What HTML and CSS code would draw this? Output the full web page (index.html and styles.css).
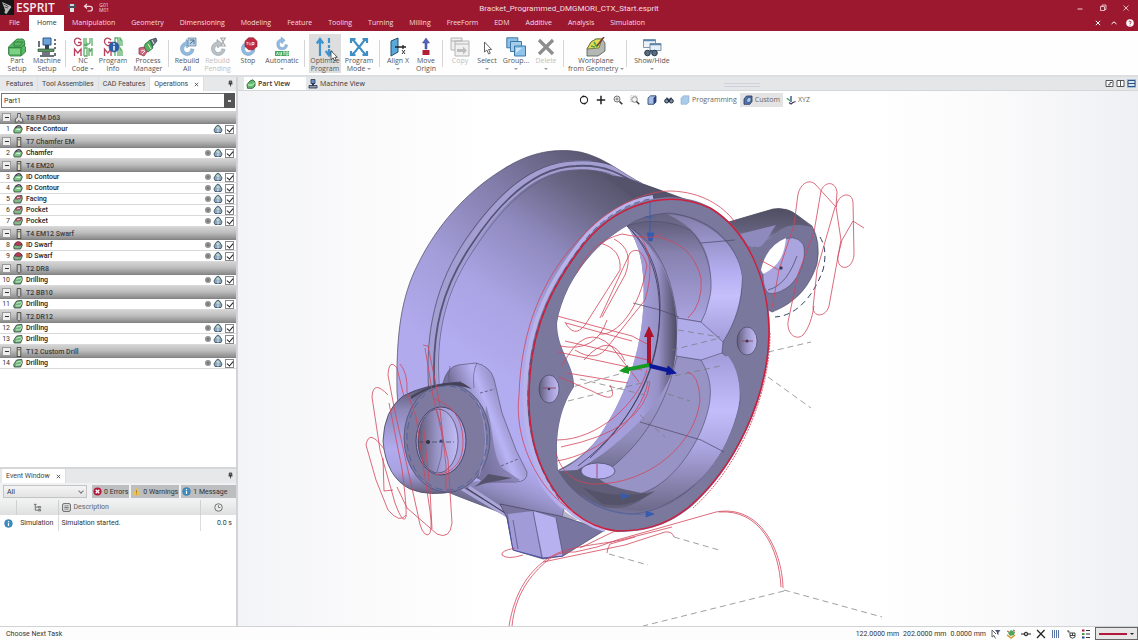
FILE: index.html
```html
<!DOCTYPE html>
<html lang="en">
<head>
<meta charset="utf-8">
<title>ESPRIT</title>
<link rel="stylesheet" href="styles.css">
</head>
<body>
<svg class="defs" aria-hidden="true">
  <symbol id="op-green" viewBox="0 0 10 10"><path d="M.7 6.5 3.6 2l5.2-.6.5 3.4L7.6 9H1.2z" fill="#6fb57b" stroke="#263e2e" stroke-width=".8"/><path d="M3.3 4.2 8.6 3M3 7l4.3-.3L9 4" fill="none" stroke="#dff5df" stroke-width=".8"/></symbol>
  <symbol id="op-ridge" viewBox="0 0 10 10"><path d="M.7 6.5 2.5 3h5.8l1 2L7.6 9H1.2z" fill="#80c48a" stroke="#263e2e" stroke-width=".8"/><path d="M2.5 4.2C3.5 1 7 .8 8.3 3.4" fill="none" stroke="#4a3d55" stroke-width="1.2"/><path d="M3.4 5.3h3.8" stroke="#e6ffe6"/></symbol>
  <symbol id="op-pocket" viewBox="0 0 10 10"><path d="M.7 6.5 3.6 2l5.2-.6.5 3.4L7.6 9H1.2z" fill="#86b98b" stroke="#2c3a33" stroke-width=".8"/><path d="M2.6 5 4 2.3l4.4-.2L7 4.8z" fill="#dfb7bd" stroke="#8f2d45" stroke-width=".9"/></symbol>
  <symbol id="op-swarf" viewBox="0 0 10 10"><path d="M.7 6.5 2.5 3h5.8l1 2L7.6 9H1.2z" fill="#80b58a" stroke="#2c3a33" stroke-width=".8"/><path d="M1.8 5C2 1 7.6.2 9 4.4L6.5 5.8z" fill="#b23b55" stroke="#4f2733" stroke-width=".6"/></symbol>
  <symbol id="mill" viewBox="0 0 6 11"><rect x="1" y=".6" width="4" height="9.8" fill="#d9d6c2" stroke="#444"/><path d="M1.5 3h3" stroke="#444" stroke-width=".8"/></symbol>
  <symbol id="drill" viewBox="0 0 6 11"><path d="M1 .6h4v7.6L3 10.4 1 8.200z" fill="#c4c4c4" stroke="#444"/></symbol>
  <symbol id="face" viewBox="0 0 10 11"><path d="M3.500.5h3v4.300l2 1.200L9.400 10H6.800L5 8.200 3.200 10H.6l.9-4 2-1.200z" fill="#ddd" stroke="#444" stroke-width=".9"/></symbol>
  <symbol id="dot" viewBox="0 0 8 8"><circle cx="4" cy="4" r="3" fill="#929292"/><circle cx="4" cy="4" r="1.200" fill="#777"/></symbol>
  <symbol id="sim" viewBox="0 0 10 10"><path d="M1 6 3 2.500l2-1.500 2 1.500L9 6 8 8.500H2z" fill="#8ea7bd" stroke="#3c5269" stroke-width=".9"/><path d="M3 3.500 5 2.500 7 4 5 6z" fill="#bfd8c4"/><path d="M5 6v2.500" stroke="#dce8f4"/></symbol>
  <symbol id="gearball" viewBox="0 0 20 20"><path d="M9 5a6.800 6.800 0 1 0 8 7.500l-3.200-.7A3.600 3.600 0 1 1 9.500 8.500l.3 2.500L14 6.500 9 2.500z" fill="currentColor" stroke="#6d8eac" stroke-width=".5"/></symbol>
  <symbol id="info" viewBox="0 0 10 10"><circle cx="5" cy="5" r="4.400" fill="#3b8fc4" stroke="#26698f" stroke-width=".4"/><path d="M5 4.300v3.500M5 2.200v1.200" stroke="#fff" stroke-width="1.300"/></symbol>
  <symbol id="pin" viewBox="0 0 6 8"><path d="M1.500 1h3v3.200h-3zM.5 4.500h5M3 4.500V7.500" fill="#777" stroke="#333" stroke-width="1"/></symbol>
  <symbol id="cross" viewBox="0 0 6 6"><path d="M1 1l4 4M5 1 1 5" stroke="currentColor" stroke-width="1" fill="none"/></symbol>
</svg>

<div class="app">
<header class="top">
  <div class="titlebar">
    <div class="brand">
      <svg class="logo" viewBox="0 0 14 15"><rect width="14" height="15" fill="#151515"/><path d="M2 2l8 3.500 1.500 1.500-2 2.500-3 4.500-2-1 .5-3z" fill="#b9b9b9"/><path d="M3.500 4l5 2.500M4.500 7l3.500 1" stroke="#333" stroke-width=".8"/></svg>
      <span>ESPRIT</span>
    </div>
    <button class="quick" aria-label="Save"><svg viewBox="0 0 10 10"><path d="M1.500 1h7v4h-7z" fill="#46505d"/><path d="M3 1h4v2H3z" fill="#cdd6df"/><path d="M3 5h4v4H3z" fill="#dce3ea"/></svg></button>
    <button class="quick" aria-label="Undo"><svg viewBox="0 0 10 10"><path d="M4 1 1.500 3.300 4 5.500M1.800 3.300h5.200a2.300 2.300 0 0 1 0 4.700H4.500" fill="none" stroke="#f3d9de" stroke-width="1.200"/></svg></button>
    <button class="gcode">G01<br>M01</button>
    <h1>Bracket_Programmed_DMGMORI_CTX_Start.esprit</h1>
    <div class="win">
      <button aria-label="Minimize"><svg viewBox="0 0 8 8"><path d="M1.500 5h5" stroke="#f0ccd3"/></svg></button>
      <button aria-label="Restore"><svg viewBox="0 0 8 8"><path d="M1.500 2.500h4v4h-4zM3 2.500V1h4v4.500H5.500" stroke="#f0ccd3" fill="none" stroke-width=".9"/></svg></button>
      <button aria-label="Close"><svg viewBox="0 0 8 8"><path d="M1.500 1.500l5 5M6.500 1.500l-5 5" stroke="#f0ccd3" stroke-width=".9"/></svg></button>
    </div>
  </div>
  <nav class="menu">
    <button class="file">File</button><button class="on">Home</button><button>Manipulation</button><button>Geometry</button><button>Dimensioning</button><button>Modeling</button><button>Feature</button><button>Tooling</button><button>Turning</button><button>Milling</button><button>FreeForm</button><button>EDM</button><button>Additive</button><button>Analysis</button><button>Simulation</button>
    <div class="win small">
      <button aria-label="Close document"><svg viewBox="0 0 8 8"><path d="M1.800 1.800l4.400 4.400M6.200 1.800 1.800 6.200" stroke="#fff"/></svg></button>
      <button aria-label="Collapse ribbon"><svg viewBox="0 0 8 8"><path d="M1.500 5 4 2.800 6.500 5" stroke="#fff" fill="none"/></svg></button>
      <button aria-label="Help"><svg viewBox="0 0 8 8"><circle cx="4" cy="4" r="3.800" fill="#fff"/><path d="M2.900 3.200c0-1.600 2.300-1.400 2.200 0C5 4 4 4 4 5M4 5.700v.8" stroke="#9b182f" fill="none" stroke-width=".9"/></svg></button>
    </div>
  </nav>
</header>

<div class="ribbon">
  <div class="set">
    <button class="w28"><svg viewBox="0 0 20 20"><path d="M1.500 10 7 4.500l3-2.500h6l1.500 2v5l1 1v5L14 19H3l-1.500-2z" fill="#58b763" stroke="#28763a" stroke-width=".8"/><path d="M2 10.500h12l4.500-3.500M14 10.500V19M7 5h9M7 5v4h6l3-4" fill="none" stroke="#2a7a3b" stroke-width=".8"/><path d="M3 12h10v5H3z" fill="#7dd184"/></svg>Part<br>Setup</button>
    <button class="w32"><svg viewBox="0 0 20 20"><path d="M6 1h8v7H6z" fill="#6fa2d6" stroke="#2b5b8e"/><path d="M8 8h4v4H8z" fill="#345"/><path d="M1 12h16v2.500H1z" fill="#5d9a62" stroke="#2d4f37" stroke-width=".7"/><path d="M5 15h8v3H5z" fill="#6e7780"/><path d="M3 19h14M2 4v6M18 2v2M18 6v2M18 10v2M18 16v3" stroke="#3b444d" stroke-width="1.500"/></svg>Machine<br>Setup</button>
  </div>
  <div class="set">
    <button class="w26"><svg viewBox="0 0 20 20" fill="none" stroke-width="1.300"><path d="M8 3C5-.5 1 1.500 1.500 5S6 9.500 8 7.500V5.500H5M1.500 19v-7l3.300 4 3.200-4v7" stroke="#b8405c"/><path d="M11 1v8l3.500-3M13 1v8l4-3V1M19 1v8M11 19v-8h3v8h-3M16 19v-8l1.500 3 1.500-3v8" stroke="#5cae69"/></svg>NC<br>Code <i></i></button>
    <button class="w34"><svg viewBox="0 0 20 20" fill="none" stroke-width="1.300"><path d="M8 3C5-.5 1 1.500 1.500 5S6 9.500 8 7.500V5.500H5M1.500 19v-7l3.300 4 3.200-4v7" stroke="#b8405c"/><path d="M12 1h3v8h-3zM17 9V1l2 3v5M12 19v-8h3v8M17 19v-8l2 3v5" stroke="#5cae69"/><circle cx="11" cy="10" r="5" fill="#2d5eaa" stroke="#234c86" stroke-width=".6"/><path d="M11 9v4.500M11 6.200v1.500" stroke="#fff" stroke-width="1.500"/></svg>Program<br>Info</button>
    <button class="w36"><svg viewBox="0 0 20 20"><path d="M12 3l6-2 1 3-5 6-4-2z" fill="#5d6e7e" stroke="#27313b" stroke-width=".6"/><path d="M7 7 12 3l3 8-5 4-4-3z" fill="#4fb05d" stroke="#205d2c" stroke-width=".7"/><path d="M1 11l5-1 3 5-3 4-5-2z" fill="#cc6b7f" stroke="#8d2942" stroke-width=".7"/><path d="M3 14l4-1M10 7l3 5M4 17l3-3M14 3l2 4" stroke="#f2e7ea"/></svg>Process<br>Manager</button>
  </div>
  <div class="set">
    <button class="w28 blue"><svg viewBox="0 0 20 20"><use href="#gearball"/><path d="M11 1h8v8h-8z" fill="#b9d0e4" stroke="#64809c" stroke-width=".7"/><path d="M13 3h4v4M13 7l4-4" stroke="#4c7298" fill="none"/></svg>Rebuild<br>All</button>
    <button class="w33 off"><svg viewBox="0 0 20 20"><use href="#gearball"/><path d="M12 1h6M12 9h6M13 1l4 8M17 1l-4 8" stroke="#aaa" stroke-width="1.200"/></svg>Rebuild<br>Pending</button>
    <button class="w28 blue"><svg viewBox="0 0 20 20"><use href="#gearball"/><path d="M10.500.8h5l3.500 3.500v5l-3.500 3.500h-5L7 9.300v-5z" fill="#c02b42" stroke="#81192b" stroke-width=".6"/><path d="M8.500 5.500h2M8.500 7h2M12 5.500v3M14 8.500v-3h2v2h-2" stroke="#fff" stroke-width=".8" fill="none"/></svg>Stop<br>&nbsp;</button>
    <button class="w40 blue"><svg viewBox="0 0 20 20"><g transform="translate(2 -2) scale(.8)"><use href="#gearball" width="20" height="20"/></g><rect x="3" y="14" width="14" height="5" fill="#45a75c"/><path d="M4.500 18l1-3 1 3M8 15v3h1.500v-3M11 15h2M12 15v3M14 15h2v3h-2z" stroke="#fff" stroke-width=".7" fill="none"/></svg>Automatic<br><i></i></button>
  </div>
  <div class="set">
    <button class="w32 hot"><svg viewBox="0 0 20 20"><path d="M5 19V3M1.800 6.500 5 2l3.200 4.500M14 1v5M14 8v3M14 12v6M10.800 14l3.200 4.500 3.200-4.500" stroke="#3f93cf" stroke-width="2.200" fill="none"/></svg>Optimize<br>Program<svg class="pointer" viewBox="0 0 8 12"><path d="M1 .8v9l2.200-2L4.600 11l1.600-.7-1.400-3h2.600z" fill="#fff" stroke="#333" stroke-width=".8"/></svg></button>
    <button class="w36"><svg viewBox="0 0 20 20"><path d="M3 2.500c3 1 3.500 4 7 7.500s4 6 7 7.500M17 2.500c-3 1-3.500 4-7 7.500s-4 6-7 7.500M2 6V2h4.500M18 6V2h-4.500M2 14v4h4.500M18 14v4h-4.500" stroke="#3f8ec4" stroke-width="2.200" fill="none"/></svg>Program<br>Mode <i></i></button>
  </div>
  <div class="set">
    <button class="w28"><svg viewBox="0 0 20 20"><path d="M3 4 10 1v14l-7 4z" fill="#5aa9dd" stroke="#24506f"/><path d="M7 10h11M15 8v4" stroke="#222" stroke-width="1.300"/><path d="M14 13l3 4M17 13l-3 4" stroke="#333"/></svg>Align X<br><i></i></button>
    <button class="w28"><svg viewBox="0 0 20 20"><path d="M10 1 6.500 6H9v6h2V6h2.500z" fill="#5263b9" stroke="#39478d" stroke-width=".5"/><path d="M6.500 13h7v5h-7z" fill="#b01f37"/></svg>Move<br>Origin</button>
  </div>
  <div class="set">
    <button class="w26 off"><svg viewBox="0 0 20 20"><path d="M1 1h11v3h7v15H5V13H1zM5 13V4h7M1 4h11M5 7h14" fill="#f0f0f0" stroke="#b4b4b4"/><path d="M7 12h6V9.500l4 4-4 4V15H7z" fill="#bdbdbd"/></svg>Copy<br>&nbsp;</button>
    <button class="w28"><svg viewBox="0 0 20 20"><path d="M7.500 5v10l2.400-2 1.700 4 1.700-.8-1.700-3.700h3z" fill="#fff" stroke="#555" stroke-width=".9"/></svg>Select<br><i></i></button>
    <button class="w30"><svg viewBox="0 0 20 20"><path d="M.8.8h11v10H.8z" fill="#8fbfe2" stroke="#3d79a8"/><path d="M4.500 4.500h11v10h-11z" fill="#a3cdea" stroke="#3d79a8"/><path d="M8.500 9h11v10h-11z" fill="#8fc3ea" stroke="#3d79a8"/><path d="M10 11h6l-6 5z" fill="#c9e4f6"/></svg>Group...<br><i></i></button>
    <button class="w30 off"><svg viewBox="0 0 20 20"><path d="M3 3l14 14M17 3 3 17" stroke="#8d8d8d" stroke-width="3.200"/></svg>Delete<br><i></i></button>
  </div>
  <div class="set">
    <button class="w56"><svg viewBox="0 0 20 20"><path d="M1 12 5 5l5-3h6l3 4v8l-7 5H1z" fill="#b4b8b5" stroke="#505650" stroke-width=".8"/><path d="M1 12 5 5l5-3h6l-3 9z" fill="#e1dd55" stroke="#666a35" stroke-width=".8"/><path d="M5 9l4 1M8 5l3 5" stroke="#51a04f" stroke-width="1.500"/><path d="M18 0 11 9" stroke="#7b3b35" stroke-width="1.600"/></svg>Workplane<br>from Geometry <i></i></button>
  </div>
  <div class="set">
    <button class="w42"><svg viewBox="0 0 20 20"><path d="M1.500 2.500h12v8h-12z" fill="#eef3f8" stroke="#8499ad"/><path d="M8 6.500h11v7H8z" fill="#e6eef6" stroke="#7890a7"/><path d="M1.500 3.500h12M8 7.500h11" stroke="#5d87b0" stroke-width="1.500"/><circle cx="5.500" cy="16" r="2.800" fill="#596c82" stroke="#26384c"/><circle cx="12.500" cy="16" r="2.800" fill="#596c82" stroke="#26384c"/><path d="M8 14h2" stroke="#26384c" stroke-width="1.500"/></svg>Show/Hide<br><i></i></button>
  </div>
</div>

<div class="work">
<aside class="side">
  <section class="ops">
    <div class="tabs"><button>Features</button><button>Tool Assemblies</button><button>CAD Features</button><button class="on">Operations <svg class="x"><use href="#cross"/></svg></button><svg class="pin"><use href="#pin"/></svg></div>
    <div class="pick"><select aria-label="Part"><option>Part1</option></select></div>
    <ul class="list">
      <li class="tool"><button aria-label="Collapse"></button><svg><use href="#face"/></svg>T8 FM D63</li>
      <li class="op"><span>1</span><svg><use href="#op-ridge"/></svg><b>Face Contour</b><svg><use href="#sim"/></svg><input type="checkbox" checked aria-label="Face Contour"></li>
      <li class="tool"><button aria-label="Collapse"></button><svg><use href="#mill"/></svg>T7 Chamfer EM</li>
      <li class="op"><span>2</span><svg><use href="#op-ridge"/></svg><b>Chamfer</b><svg class="d"><use href="#dot"/></svg><svg><use href="#sim"/></svg><input type="checkbox" checked aria-label="Chamfer"></li>
      <li class="tool"><button aria-label="Collapse"></button><svg><use href="#mill"/></svg>T4 EM20</li>
      <li class="op"><span>3</span><svg><use href="#op-ridge"/></svg><b>ID Contour</b><svg class="d"><use href="#dot"/></svg><svg><use href="#sim"/></svg><input type="checkbox" checked aria-label="ID Contour 3"></li>
      <li class="op"><span>4</span><svg><use href="#op-ridge"/></svg><b>ID Contour</b><svg class="d"><use href="#dot"/></svg><svg><use href="#sim"/></svg><input type="checkbox" checked aria-label="ID Contour 4"></li>
      <li class="op"><span>5</span><svg><use href="#op-pocket"/></svg><b>Facing</b><svg class="d"><use href="#dot"/></svg><svg><use href="#sim"/></svg><input type="checkbox" checked aria-label="Facing"></li>
      <li class="op"><span>6</span><svg><use href="#op-pocket"/></svg><b>Pocket</b><svg class="d"><use href="#dot"/></svg><svg><use href="#sim"/></svg><input type="checkbox" checked aria-label="Pocket 6"></li>
      <li class="op"><span>7</span><svg><use href="#op-pocket"/></svg><b>Pocket</b><svg class="d"><use href="#dot"/></svg><svg><use href="#sim"/></svg><input type="checkbox" checked aria-label="Pocket 7"></li>
      <li class="tool"><button aria-label="Collapse"></button><svg><use href="#mill"/></svg>T4 EM12 Swarf</li>
      <li class="op"><span>8</span><svg><use href="#op-swarf"/></svg><b>ID Swarf</b><svg class="d"><use href="#dot"/></svg><svg><use href="#sim"/></svg><input type="checkbox" checked aria-label="ID Swarf 8"></li>
      <li class="op"><span>9</span><svg><use href="#op-swarf"/></svg><b>ID Swarf</b><svg class="d"><use href="#dot"/></svg><svg><use href="#sim"/></svg><input type="checkbox" checked aria-label="ID Swarf 9"></li>
      <li class="tool"><button aria-label="Collapse"></button><svg><use href="#drill"/></svg>T2 DR8</li>
      <li class="op"><span>10</span><svg><use href="#op-green"/></svg><b>Drilling</b><svg class="d"><use href="#dot"/></svg><svg><use href="#sim"/></svg><input type="checkbox" checked aria-label="Drilling 10"></li>
      <li class="tool"><button aria-label="Collapse"></button><svg><use href="#drill"/></svg>T2 BB10</li>
      <li class="op"><span>11</span><svg><use href="#op-green"/></svg><b>Drilling</b><svg class="d"><use href="#dot"/></svg><svg><use href="#sim"/></svg><input type="checkbox" checked aria-label="Drilling 11"></li>
      <li class="tool"><button aria-label="Collapse"></button><svg><use href="#drill"/></svg>T2 DR12</li>
      <li class="op"><span>12</span><svg><use href="#op-green"/></svg><b>Drilling</b><svg class="d"><use href="#dot"/></svg><svg><use href="#sim"/></svg><input type="checkbox" checked aria-label="Drilling 12"></li>
      <li class="op"><span>13</span><svg><use href="#op-green"/></svg><b>Drilling</b><svg class="d"><use href="#dot"/></svg><svg><use href="#sim"/></svg><input type="checkbox" checked aria-label="Drilling 13"></li>
      <li class="tool"><button aria-label="Collapse"></button><svg><use href="#mill"/></svg>T12 Custom Drill</li>
      <li class="op"><span>14</span><svg><use href="#op-green"/></svg><b>Drilling</b><svg class="d"><use href="#dot"/></svg><svg><use href="#sim"/></svg><input type="checkbox" checked aria-label="Drilling 14"></li>
    </ul>
  </section>
  <section class="events">
    <div class="tabs"><button class="on">Event Window <svg class="x"><use href="#cross"/></svg></button><svg class="pin"><use href="#pin"/></svg></div>
    <div class="filters">
      <div class="all"><select aria-label="Filter"><option>All</option></select></div>
      <button><svg viewBox="0 0 10 10"><circle cx="5" cy="5" r="4.500" fill="#b3173b"/><path d="M3 3l4 4M7 3 3 7" stroke="#fff" stroke-width="1.400"/></svg>0 Errors</button>
      <button><svg viewBox="0 0 10 10"><path d="M5 .8 9.600 9.300H.4z" fill="#edc04a"/><path d="M5 3.500v3M5 7.300v1" stroke="#a67a12"/></svg>0 Warnings</button>
      <button><svg viewBox="0 0 10 10"><use href="#info"/></svg>1 Message</button>
    </div>
    <table>
      <colgroup><col class="c1"><col class="c2"><col><col class="c4"></colgroup>
      <thead><tr><th></th><th><svg viewBox="0 0 10 10"><path d="M1 1.500h3M2.500 1.500V8H6M2.500 4.500H6M6 4h2.500v1.500H6zM6 7.300h2.500v1.500H6z" fill="none" stroke="#666"/></svg></th><th class="desc"><svg viewBox="0 0 10 10"><rect x=".7" y=".7" width="8.600" height="8.600" rx="1.500" fill="none" stroke="#555"/><path d="M2.500 3.200h5M2.500 5h5M2.500 6.800h5" stroke="#555" stroke-width=".8"/></svg>Description</th><th><svg viewBox="0 0 10 10"><circle cx="5" cy="5" r="4.200" fill="none" stroke="#666"/><path d="M5 2.500V5h2" fill="none" stroke="#666" stroke-width=".9"/></svg></th></tr></thead>
      <tbody><tr><td><svg><use href="#info"/></svg></td><td>Simulation</td><td class="msg">Simulation started.</td><td class="time">0.0 s</td></tr></tbody>
    </table>
  </section>
</aside>

<main class="view">
  <div class="viewtabs">
    <button class="on"><svg viewBox="0 0 10 10"><path d="M1 5.500 4 2l3-1.200L9 3v4L6.500 9.300H1.500z" fill="#62bd6c" stroke="#27613a" stroke-width=".9"/><path d="M2 6h4.500L9 3.500" stroke="#d9f5da" fill="none"/></svg>Part View</button>
    <button><svg viewBox="0 0 10 10"><path d="M3 .5h4v4H3z" fill="#6b8fc0" stroke="#24344c" stroke-width=".8"/><path d="M1 6.500h8v2.500H1z" fill="#8d99a7" stroke="#24344c" stroke-width=".8"/><path d="M5 4.500v2" stroke="#24344c" stroke-width="2"/></svg>Machine View</button>
    <div class="panes">
      <button aria-label="Single pane"><svg viewBox="0 0 9 9"><path d="M1 1.500h7v6H1zM3 5.800h2V3.500h2" fill="#fff" stroke="#555"/></svg></button>
      <button aria-label="Two columns"><svg viewBox="0 0 9 9"><path d="M1 1.500h7v6H1zM4.500 1.500v6" fill="#fff" stroke="#555"/></svg></button>
      <button class="on" aria-label="Two rows"><svg viewBox="0 0 9 9"><path d="M1 1.500h7v6H1zM1 4.500h7" fill="#d9e6f5" stroke="#2c527e"/></svg></button>
    </div>
    <span class="grip"></span>
  </div>
  <div class="stage">
    <svg class="part" viewBox="238 91 900 535" role="img" aria-label="Bracket model">
      <defs>
        <linearGradient id="gBody" gradientUnits="userSpaceOnUse" x1="640" y1="172" x2="500" y2="375"><stop offset="0" stop-color="#4c4b5f"/><stop offset=".2" stop-color="#656380"/><stop offset=".45" stop-color="#8e89bd"/><stop offset=".75" stop-color="#aaa4e4"/><stop offset="1" stop-color="#b2acf0"/></linearGradient>
        <linearGradient id="gBack" gradientUnits="userSpaceOnUse" x1="590" y1="150" x2="420" y2="340"><stop offset="0" stop-color="#58566f"/><stop offset=".35" stop-color="#827daa"/><stop offset=".7" stop-color="#a39dd9"/><stop offset="1" stop-color="#b1abee"/></linearGradient>
        <linearGradient id="gLow" gradientUnits="userSpaceOnUse" x1="520" y1="455" x2="495" y2="520"><stop offset="0" stop-color="#a8a2e0" stop-opacity="0"/><stop offset="1" stop-color="#5a5873"/></linearGradient>
        <linearGradient id="gBoss" x1="0" y1="0" x2="0" y2="1"><stop offset="0" stop-color="#4f4d63"/><stop offset=".25" stop-color="#8d88b8"/><stop offset=".6" stop-color="#b2acef"/><stop offset=".8" stop-color="#a8a2e2"/><stop offset="1" stop-color="#65627f"/></linearGradient>
        <linearGradient id="gArm" gradientUnits="userSpaceOnUse" x1="470" y1="430" x2="516" y2="412"><stop offset="0" stop-color="#75719b"/><stop offset=".5" stop-color="#b9b4f5"/><stop offset="1" stop-color="#8580b0"/></linearGradient>
        <linearGradient id="gBore" gradientUnits="userSpaceOnUse" x1="0" y1="215" x2="0" y2="515"><stop offset="0" stop-color="#666481"/><stop offset=".2" stop-color="#918cbd"/><stop offset=".45" stop-color="#a7a1dc"/><stop offset=".75" stop-color="#8f8bb9"/><stop offset=".9" stop-color="#605e79"/><stop offset="1" stop-color="#77749a"/></linearGradient>
        <linearGradient id="gTube" gradientUnits="userSpaceOnUse" x1="640" y1="0" x2="677" y2="0"><stop offset="0" stop-color="#a49fdb"/><stop offset=".5" stop-color="#9590c4"/><stop offset="1" stop-color="#4c4a61"/></linearGradient>
        <linearGradient id="gFloor" gradientUnits="userSpaceOnUse" x1="0" y1="225" x2="0" y2="320"><stop offset="0" stop-color="#646180"/><stop offset=".3" stop-color="#8782af"/><stop offset="1" stop-color="#a9a3e0"/></linearGradient>
        <linearGradient id="gWall" x1="0" y1="0" x2="0" y2="1"><stop offset="0" stop-color="#817da8"/><stop offset=".45" stop-color="#b3adf0"/><stop offset=".65" stop-color="#c5c0fb"/><stop offset="1" stop-color="#a39ddb"/></linearGradient>
        <linearGradient id="gWall2" x1="0" y1="0" x2="0" y2="1"><stop offset="0" stop-color="#a39ddb"/><stop offset=".35" stop-color="#c3bdfb"/><stop offset=".6" stop-color="#aaa4df"/><stop offset="1" stop-color="#6c6988"/></linearGradient>
        <linearGradient id="gHole" x1="0" y1="0" x2="1" y2="0"><stop offset="0" stop-color="#5e5b76"/><stop offset=".5" stop-color="#9c97cb"/><stop offset="1" stop-color="#c2bdf6"/></linearGradient>
        <linearGradient id="gLug" x1="0" y1="0" x2="0" y2="1"><stop offset="0" stop-color="#4f4e62"/><stop offset=".6" stop-color="#65637e"/><stop offset="1" stop-color="#aaa4e1"/></linearGradient>
        <clipPath id="barrel"><path d="M397 392C396 335 401 297 418 264C436 227 466 192 502 170C525 155 550 147 580 152C604 157 623 174 643 184L707 207 620 300 560 524C530 521 500 513 450 493C420 480 399 430 397 392z"/></clipPath>
      </defs>

      <!-- right lug -->
      <path d="M722 224 773 209Q787 207 797 215L812 226Q821 242 817 264C808 292 790 305 772 312L750 300z" fill="#77749a" stroke="#3d3c50" stroke-width=".6"/>
      <path d="M728 222 773 209Q787 207 797 215L812 227C795 222 780 226 771 238L752 247 737 232z" fill="url(#gLug)"/>
      <path d="M740 234 776 225C768 236 764 247 758 247L748 246z" fill="#8e8abd"/>
      <path d="M768 293C759 283 762 255 778 243Q794 232 803 244C808 257 799 281 785 289Q775 295 768 293z" fill="#aaa4df" stroke="#4c4963" stroke-width=".6"/>
      <path d="M761 270Q766 246 786 238C784 258 777 267 763 274z" fill="#fff"/>
      <path d="M768 290C783 286 791 272 797 256" fill="none" stroke="#46435e" stroke-width=".7"/>

      <!-- barrel -->
      <path d="M397 392C396 335 401 297 418 264C436 227 466 192 502 170C525 155 550 147 580 152C604 157 623 174 643 184L707 207 620 300 560 524C530 521 500 513 450 493C420 480 399 430 397 392z" fill="url(#gBack)" stroke="#4a4862" stroke-width=".7"/>
      <g clip-path="url(#barrel)">
      <path d="M440 400C436 345 443 300 467 257C493 213 525 180 575 171C605 167 640 180 668 193L707 207 600 300 560 522C510 512 450 480 440 400z" fill="url(#gBody)"/>
      <path d="M434 394C429 332 441 285 470 243C500 199 534 166 575 165C603 163 624 174 640 186" fill="none" stroke="#a39fd2" stroke-width="9"/>
      <path d="M429 394C424 330 437 282 466 239C497 194 532 162 575 161C607 159 628 170 643 185" fill="none" stroke="#45435c" stroke-width=".7"/>
      <path d="M435 394C430 332 443 286 472 244C501 200 535 167 576 166C605 164 624 175 640 187" fill="none" stroke="#565477" stroke-width="1.800"/>
      <path d="M440 394C434 334 446 290 475 248C504 204 537 172 577 171C604 168 622 177 638 189" fill="none" stroke="#5e5b7d" stroke-width=".7"/>
      <path d="M604 176Q626 174 646 186L707 207 640 203z" fill="#55536b"/>
      </g>
      <path d="M455 480C475 485 500 480 529 458Q540 498 578 520L510 517 450 493z" fill="url(#gLow)"/>
      <path d="M462 489 517 522M469 487 516 518" stroke="#aaa6d9" stroke-width="3"/><path d="M466 488 516 520" stroke="#39374d" stroke-width="1"/>

      <!-- foot -->
      <path d="M500 504 560 516 605 530 563 556 543 559 513 550 507 518z" fill="#7975a1" stroke="#45435f" stroke-width=".7"/>
      <path d="M508 514 533 511 543 558 513 550z" fill="#a19bd7"/><path d="M533 511 556 518 563 556 543 558z" fill="#b7b1ef"/>
      <path d="M533 511 542 558M556 518 563 556M513 520l5 29" stroke="#454364" stroke-width=".6"/>
      <path d="M507 517 513 550 543 558 563 556" stroke="#4b52a8" fill="none"/>

      <!-- arm and left boss -->
      <path d="M443 383Q447 367 458 365L476 363Q490 366 494 379L502 413 516 450 527 472Q528 482 515 482L486 482 460 470z" fill="url(#gArm)" stroke="#5b5878" stroke-width=".7"/>
      <path d="M486 405C494 430 492 455 502 468L520 480Q515 483 505 482L480 484z" fill="#7874a0" opacity=".7"/>
      <path d="M480 393 495 389M501 466 518 459" stroke="#34324a" stroke-width=".6" fill="none" stroke-dasharray="3 2"/>
      <path d="M450 366Q448 376 449 382M477 363Q472 372 474 388" stroke="#5b5878" stroke-width=".6" fill="none"/>
      <path d="M461 382Q425 384 403 396Q384 410 383 441Q386 477 410 489Q430 497 456 491z" fill="url(#gBoss)" stroke="#454360" stroke-width=".8"/>
      <ellipse cx="447" cy="438" rx="43" ry="54" fill="#7d799f" stroke="#5c5982"/>
      <path d="M478 402Q493 440 479 476" fill="none" stroke="#9b96c8"/>
      <ellipse cx="447" cy="438" rx="40" ry="52" fill="none" stroke="#3d60a5" stroke-width=".8" stroke-dasharray="7 4"/>
      <path d="M411 396Q438 380 463 383L472 389Q440 378 411 399z" fill="#45435a"/>
      <path d="M474 487Q484 480 488 474L512 478 486 483z" fill="#55536c"/>
      <ellipse cx="441" cy="441" rx="25" ry="34" fill="#a9a3df" stroke="#48466a"/>
      <ellipse cx="438" cy="441" rx="20" ry="32" fill="url(#gHole)" stroke="#403e59" stroke-width=".7"/>
      <path d="M437 411Q448 441 437 472" stroke="#55527c" fill="none" stroke-width=".6"/>
      <path d="M418 442h36" stroke="#3c3a52" stroke-width=".7" stroke-dasharray="5 2"/><circle cx="428" cy="442" r="2" fill="#343248"/><circle cx="441" cy="441" r="1.500" fill="#3a4673"/>

      <!-- front face -->
      <path d="M653 199C674 195 693 198 710 207C748 229 770 278 770 333C769 398 736 468 691 507C665 528 641 532 617 532C584 528 559 506 544 475C529 445 525 410 528 375C532 321 552 282 583 243C603 218 628 203 653 199z" fill="#7b789e"/>
      <path d="M653 197C628 201 601 216 581 242C550 281 530 321 526 375C523 410 527 445 542 475C556 503 578 522 605 530" fill="none" stroke="#b8b3e8" stroke-width="4"/>
      <path d="M627 226C588 248 563 287 557 323C557 351 575 365 574 387C562 405 554 430 558 470C574 497 600 513 633 514C684 509 728 462 740 400C739 377 736 364 722 353L723 342C736 321 743 300 742 277C737 241 708 216 667 213Q642 215 627 226z" fill="url(#gBore)" stroke="#55527a" stroke-width=".7"/>
      <path d="M667 214C703 216 738 242 742 277C741 302 735 322 723 340L701 322C713 301 714 270 705 250C697 230 681 221 667 214z" fill="url(#gWall)"/>
      <path d="M627 226C645 219 670 220 690 230C708 247 715 281 709 300Q706 314 701 322L677 318C671 270 655 241 627 226z" fill="url(#gFloor)" stroke="#4b4968" stroke-width=".6"/>
      <path d="M701 360 728 356C739 370 742 390 738 409C727 454 699 497 642 511L600 507C647 500 681 473 701 431C715 397 710 378 701 360z" fill="url(#gWall2)"/>
      <path d="M677 356 701 360C713 381 714 400 701 431C687 462 663 489 636 495L590 483C626 460 662 425 677 356z" fill="#9893c5" stroke="#4b4968" stroke-width=".6"/>
      <path d="M558 470Q580 460 590 453C585 483 615 488 648 494Q630 512 604 507Q576 497 558 470z" fill="#605e79"/>
      <path d="M583 488Q620 500 655 491Q632 509 602 504z" fill="#504e64" opacity=".7"/>
      <path d="M677 318 701 322 723 342 722 353 701 360 676 356z" fill="#b0abe9" stroke="#5b5880" stroke-width=".7"/>
      <path d="M627 226C588 248 563 287 557 323C557 351 575 365 574 387C562 405 554 430 558 470Q588 455 602 432C633 384 647 330 643 275Q641 246 627 226z" fill="#fffefe"/>
      <path d="M627 226Q641 246 643 275C647 330 633 384 602 432Q585 460 558 471L577 470C612 452 665 405 674 365C682 315 674 260 627 226z" fill="url(#gTube)"/>
      <path d="M627 226C650 247 661 274 660 310C659 366 635 417 590 458M631 230C653 256 662 284 659 328C655 373 633 424 578 466" fill="none" stroke="#3b3956" stroke-width=".8"/>
      <g stroke="#45435f" stroke-width=".7"><ellipse cx="549" cy="389" rx="10" ry="14" fill="url(#gHole)"/><ellipse cx="747" cy="341" rx="10" ry="14" fill="url(#gHole)"/><ellipse cx="598" cy="471" rx="17" ry="8" fill="#b8b2f2"/></g>
      <path d="M640 422 701 440 724 452M701 243 735 240M633 303 660 310 679 317" stroke="#4a4866" stroke-width=".7" fill="none"/>
      <path d="M583 495Q609 518 648 514" fill="none" stroke="#536cad" stroke-width=".8"/>
      <path d="M646 511 654 514 646 517zM621 493 629 496 622 499zM645 217h8M647 233h7l-2 8h-3zM650 202v35" fill="#355cae" stroke="#355cae" stroke-width=".8"/>

      <!-- dashed guides -->
      <g fill="none" stroke="#777" stroke-width=".7" stroke-dasharray="6 4">
        <path d="M568 401 650 381M565 389 645 367M768 352 811 342M768 377 811 408M609 554 648 565M674 537 719 550M784 590 882 617M784 591 643 626M678 330 720 337M672 350 720 338M580 379 645 395M665 378 720 366M668 394 690 401M640 415 665 437"/>
        <path d="M820 237Q828 250 823 270C812 300 794 316 775 317" stroke="#2c4362" stroke-width="1"/>
        <path d="M529 375C533 323 555 278 590 234C608 214 632 202 650 199" stroke="#384075"/>
        <path d="M528 390C527 430 536 470 562 503" stroke="#384075"/>
      </g>

      <!-- toolpaths -->
      <g fill="none" stroke="#d2455b" stroke-width=".8">
        <path d="M653 201C674 197 693 200 710 208C747 230 769 279 769 333C768 398 735 467 690 506C665 527 641 531 617 531C584 527 560 505 545 474C530 444 527 410 530 375C534 322 554 283 584 244C604 219 629 206 653 201" stroke="#cc1f3c" stroke-width="1.500"/>
        <path d="M770 333C770 398 737 469 693 508" stroke="#e02e4c" stroke-dasharray="2 1"/>
        <path d="M519 395C521 329 543 275 583 235C615 202 649 191 671 191C701 192 722 205 735 222M519 395C514 435 534 488 574 512"/>
        <path d="M772 308 779 270 794 225 798 194C801 183 809 179 815 184L836 207M788 322 798 274 814 232 821 191C824 182 835 180 837 192L836 207 841 240 829 306C826 317 814 318 813 308L817 270 835 207M788 322C787 334 796 341 803 335 809 328 812 318 814 306M836 207C838 193 852 191 853 202L854 254C853 272 836 271 838 256L842 240 853 221 864 228"/>
        <path d="M779 270 760 260"/>
        <path d="M404 397 397 368Q389 358 388 375L395 412 418 515Q421 535 428 535 433 533 430 511L416 417 407 392Q408 373 400 364M388 395Q373 379 372 397L380 450 395 503Q403 525 406 517 407 508 402 469L389 403M384 449Q369 428 366 445L376 480 388 510Q400 524 406 515M383 458 384 491 393 490M425 348 433 396 448 460 452 523Q450 540 437 534L407 508 397 487M428 346 439 400 446 466 446 490M428 346l-5-1M423 422 430 490 432 529"/>
        <path d="M434 399Q462 408 463 440T435 475"/>
        <path d="M512 626C515 595 530 575 548 560Q558 551 575 552 598 548 617 540L716 512C760 504 782 550 783 588M509 626C515 590 530 570 550 557 570 545 600 545 621 540L672 527M515 548Q500 551 502 555 507 560 523 555M543 562 625 545 665 532Q672 531 674 537M635 537 610 544Q607 549 607 553M580 548 615 531M719 512C760 509 779 548 781 587"/>
        <path d="M600 243Q622 249 620 270L585 325Q574 339 565 322M614 239Q635 250 625 275L602 317M640 236Q657 260 645 300L609 345Q597 364 575 350M577 273Q590 242 622 234 655 241 662 233M600 318 630 253Q640 244 647 265C640 310 616 336 600 334M557 316 632 336 647 344M566 323 632 341M558 352 642 370M562 366Q585 320 612 347L639 382M584 360Q610 330 625 361M560 346Q596 353 607 320M565 341 648 360"/>
        <path d="M657 237Q692 243 701 278 703 304 688 318M687 372Q699 374 700 400C696 443 650 484 596 484 571 484 560 468 556 453M648 382C640 420 599 454 557 461M647 370C638 403 598 440 557 440M650 382Q645 430 561 447"/>
        <path d="M559 377 592 391Q620 406 610 385M567 373 628 383" />
        <path d="M543 388h13M597 464v14M742 341h11" stroke="#963552"/>
      </g>
      <g fill="#3c3953"><circle cx="549" cy="389" r="1.300"/><circle cx="747" cy="341" r="1.500"/><circle cx="781" cy="268" r="1.700"/></g>

      <!-- axes -->
      <path d="M647 365V337h-3l5-11 5 11h-3v28z" fill="#ae122b"/>
      <path d="M649 363 628 367.500V365l-9 6 10 3v-3l20-4z" fill="#159a22"/>
      <path d="M649 363.500 667 368l1-2.500 9 8-11 1.500.5-3-17-4z" fill="#0b1799"/>
    </svg>
    <div class="viewbar">
      <button aria-label="Rotate"><svg viewBox="0 0 10 10"><circle cx="5" cy="5" r="3.600" fill="none" stroke="#222" stroke-width="1.100"/><path d="M3.800.3 6 1.400 3.800 2.600zM6.200 9.700 4 8.600l2.200-1.200z" fill="#222"/></svg></button>
      <button aria-label="Pan"><svg viewBox="0 0 10 10"><path d="M5 .8v8.400M.8 5h8.400" stroke="#222" stroke-width="1.500"/></svg></button>
      <button aria-label="Zoom fit"><svg viewBox="0 0 10 10"><circle cx="4" cy="4" r="3" fill="#e9eef2" stroke="#777"/><path d="M6.500 6.500 9.300 9.300" stroke="#333" stroke-width="1.600"/><path d="M2.500 4h3M4 2.500v3" stroke="#666" stroke-width=".8"/></svg></button>
      <button aria-label="Zoom window"><svg viewBox="0 0 10 10"><path d="M.8.8h6v6h-6z" fill="none" stroke="#999" stroke-width=".7" stroke-dasharray="1 1"/><circle cx="4.500" cy="4.500" r="2.800" fill="#f0f2f4" stroke="#888"/><path d="M6.500 6.500 9.300 9.300" stroke="#333" stroke-width="1.400"/></svg></button>
      <button aria-label="View cube"><svg viewBox="0 0 10 10"><path d="M1 3 3.500.8H9V7L6.800 9.300H1z" fill="#a6bde2" stroke="#223a66" stroke-width=".8"/><path d="M6.500 3 9 .8V7L6.500 9.300z" fill="#283f86"/></svg></button>
      <button aria-label="Find"><svg viewBox="0 0 10 10"><circle cx="2.700" cy="6" r="2" fill="#7c8da6" stroke="#1f2b3d"/><circle cx="7.300" cy="6" r="2" fill="#7c8da6" stroke="#1f2b3d"/><path d="M2 3.200h2v2h2v-2h2" stroke="#1f2b3d" fill="none"/></svg></button>
      <button class="wide"><svg viewBox="0 0 10 10"><path d="M1 3 3.500.8H9V7L6.800 9.300H1z" fill="#a9cbea" stroke="#86abd0" stroke-width=".6"/></svg>Programming</button>
      <button class="wide on"><svg viewBox="0 0 10 10"><path d="M1 4 3.500 1H9v5.500L6.800 9.300H1z" fill="#5576ad" stroke="#22355d" stroke-width=".8"/><path d="M3 6 5 2.500h3v3L6 8z" fill="#a8c3e6" stroke="#253d68" stroke-width=".6"/></svg>Custom</button>
      <button class="wide"><svg viewBox="0 0 10 10"><path d="M5 1v6" stroke="#2b3f88" stroke-width="1.300"/><path d="M4.500 6 .8 3.200" stroke="#42a852" stroke-width="1.300"/><path d="M3 7.500 5 9l2-1.500 2.500-1" stroke="#403865" stroke-width="1.300" fill="none"/></svg>XYZ</button>
    </div>
  </div>
</main>
</div>

<footer class="status">
  <span>Choose Next Task</span>
  <div class="right">
    <span>122.0000 mm</span><span>202.0000 mm</span><span>0.0000 mm</span>
    <button class="first" aria-label="Selection filter"><svg viewBox="0 0 10 10"><path d="M1 1v7l2-1.500L4.500 9.500M1 1l4 4" fill="none" stroke="#555" stroke-width=".9"/><path d="M4 1h5.500L7.500 3.500V6L6 5V3.500z" fill="#4b5578"/></svg></button>
    <button aria-label="Refresh model"><svg viewBox="0 0 10 10"><path d="M2 4 5 1l4 2-1 3-4 1z" fill="#4fa75c"/><path d="M1 6l4 3 4-3" fill="none" stroke="#d69a2d" stroke-width="1.500"/><path d="M1 2l2 1M7 1l2 1" stroke="#b64d42"/></svg></button>
    <button aria-label="Snap"><svg viewBox="0 0 10 10"><path d="M0 5h10" stroke="#222"/><circle cx="5" cy="5" r="1.800" fill="#bbb" stroke="#222"/></svg></button>
    <button aria-label="Intersection"><svg viewBox="0 0 10 10"><path d="M1 1l8 8M8.500 1 1 9" stroke="#222" stroke-width="1.200"/></svg></button>
    <button aria-label="Grid"><svg viewBox="0 0 10 10"><path d="M1.500 1v8M3.500 1v8M5.500 1v8M7.500 1v8" stroke="#5d77a4"/></svg></button>
    <button aria-label="Mouse help"><svg viewBox="0 0 10 10"><path d="M1 2h2v2M4 4h5v4Q6.500 10.500 4 8zM6.500 4v2.500M4 6.500h5" fill="none" stroke="#333" stroke-width=".9"/></svg></button>
    <button aria-label="Properties"><svg viewBox="0 0 10 10"><path d="M1 1.500h2.500" stroke="#b3173b" stroke-width="2"/><path d="M1 5h2.500" stroke="#3d9c4d" stroke-width="2"/><path d="M1 8.500h2.500" stroke="#2c3f88" stroke-width="2"/><path d="M5 1.500h4M5 5h4M5 8.500h4" stroke="#333" stroke-width="1.200"/></svg></button>
    <button class="line" aria-label="Line style"><i></i></button>
  </div>
</footer>
</div>
</body>
</html>
```

FILE: styles.css
```css
* { box-sizing: border-box; }
body { margin: 0; font: 7px/8px "Open Sans", "Noto Sans", sans-serif; color: #333; background: #fff; }
button, select, input { font: inherit; color: inherit; margin: 0; padding: 0; border: 0; background: none; }
svg { display: block; flex: none; }
.defs { position: absolute; width: 0; height: 0; }
.app { display: flex; flex-direction: column; height: 100vh; overflow: hidden; }

/* title and menu */
.top { background: #9b182f; color: #f3dde1; }
.titlebar { display: flex; align-items: center; height: 15px; position: relative; }
.brand { display: flex; align-items: center; gap: 2px; width: 64px; font: 600 12px/15px "Open Sans", sans-serif; color: #f7e9ec; }
.logo { width: 14px; height: 15px; }
.quick { width: 16px; display: flex; justify-content: center; }
.quick svg { width: 10px; height: 10px; }
.gcode { width: 16px; font-size: 5px; line-height: 5px; }
.titlebar h1 { flex: 1; margin: 2px 0 0; font: 400 8px/10px Roboto, sans-serif; text-align: center; }
.win { display: flex; align-items: center; gap: 15px; padding: 0 8px 0 0; width: 112px; justify-content: flex-end; }
.win svg { width: 8px; height: 8px; }
.win.small { gap: 8px; padding-right: 4px; margin-left: auto; }
.menu { display: flex; height: 16px; }
.menu > button { padding: 0 8px; }
.menu > .file { width: 29px; }
.menu > .on { width: 35px; background: #fff; color: #333; }

/* ribbon */
.ribbon { display: flex; height: 46px; padding-top: 3px; border-bottom: 2px solid #dcdfe1; background: #fefefe; color: #555; }
.set { display: flex; padding: 0 3px; position: relative; }
.set::after { content: ""; position: absolute; right: 0; top: 6px; height: 27px; width: 1px; background: #d5d5d5; }
.set:last-child::after { display: none; }
.set + .set { padding-left: 4px; }
.set button { position: relative; display: block; height: 39px; padding-top: 2px; text-align: center; vertical-align: top; white-space: nowrap; align-self: flex-start; }
.set button > svg { width: 20px; height: 20px; margin: 0 auto; }
.set button > .pointer { position: absolute; width: 8px; height: 12px; left: 21px; top: 16px; }
.set i { display: inline-block; border: 2px solid transparent; border-top-color: #999; border-bottom: 0; vertical-align: middle; }
.off { color: #c0c0c0; }
.blue svg { color: #8fbbe2; }
.hot { background: #dedede; }
.w26 { width: 26px; } .w28 { width: 28px; } .w30 { width: 30px; } .w32 { width: 32px; } .w33 { width: 33px; }
.w34 { width: 34px; } .w36 { width: 36px; } .w40 { width: 40px; } .w42 { width: 42px; } .w56 { width: 56px; }

/* panels */
.work { flex: 1; min-height: 0; display: flex; }
.side { width: 238px; display: flex; flex-direction: column; border-right: 2px solid #d2d4d6; background: #fff; font-family: Roboto, sans-serif; }
.ops { flex: 1; min-height: 0; border-bottom: 2px solid #d4d6d8; }
.tabs { display: flex; height: 14px; padding-left: 2px; background: #e6e8e9; color: #444; }
.tabs button { padding: 0 4px; border-right: 1px solid #dcdee0; display: flex; align-items: center; gap: 6px; white-space: nowrap; }
.tabs .on { background: #fff; }
.tabs .x { width: 5px; height: 5px; }
.pin { width: 5px; height: 7px; margin: 3px 3px 0 auto; }
.pick { position: relative; margin: 2px 1px 3px; }
select { appearance: none; display: block; width: 100%; border-radius: 0; }
.pick select { height: 15px; padding: 0 2px; border: 1px solid #777; background: #fff; }
.pick::after { content: ""; position: absolute; right: 0; top: 0; width: 11px; height: 15px; background: conic-gradient(#ddd 0 0) center / 3px 2px no-repeat #555; pointer-events: none; }
.list { margin: 0; padding: 0; list-style: none; }
.list li { display: flex; align-items: center; }
.list svg { width: 10px; height: 10px; }
.tool { height: 13px; padding-left: 2px; gap: 2px; background: linear-gradient(#d4d4d4, #bcbcbc 45%, #8c8c8c 92%, #7c7c7c); font-weight: 500; color: #3c3c3c; }
.tool button { width: 9px; height: 9px; margin-right: 1px; border: 1px solid #999; background: linear-gradient(#333, #333) center / 4px 1px no-repeat #eee; }
.op { height: 11px; padding-right: 2px; border-bottom: 1px solid #d9d9d9; }
.op span { width: 10px; margin-right: 3px; text-align: right; }
.op b { flex: 1; padding-left: 3px; font-weight: 500; color: #222; }
.op .d { width: 8px; height: 8px; margin-right: 1px; }
.op input { appearance: none; width: 9px; height: 9px; margin-left: 2px; border: 1px solid #888; background: #fff; position: relative; }
.op input:checked::before { content: ""; position: absolute; left: 2px; top: 0; width: 3px; height: 5px; border: solid #222; border-width: 0 1px 1px 0; transform: rotate(40deg); }

/* events */
.events { height: 157px; }
.filters { display: flex; align-items: center; gap: 2px; height: 17px; padding-left: 3px; background: #f0f1f2; overflow: hidden; }
.filters .all { position: relative; width: 84px; margin-right: 3px; flex: none; }
.all select { height: 13px; padding: 0 3px; border: 1px solid #c4c4c4; background: linear-gradient(#f4f4f4, #e4e4e4); }
.all::after { content: ""; position: absolute; right: 4px; top: 4px; width: 3px; height: 3px; border: solid #777; border-width: 0 1px 1px 0; transform: rotate(45deg); pointer-events: none; }
.filters button { display: flex; align-items: center; gap: 2px; height: 13px; padding: 0 1px; background: #bcbec0; white-space: nowrap; flex: none; }
.filters svg { width: 9px; height: 9px; }
.filters button:last-child { flex: 1 0 auto; }
.events table { width: 100%; border-collapse: collapse; table-layout: fixed; }
.c1 { width: 16px; } .c2 { width: 42px; } .c4 { width: 36px; }
.events th { height: 15px; padding: 0; border-right: 1px solid #cfd1d3; background: linear-gradient(#f2f2f2, #dedfe0); font-weight: 400; color: #666; }
.events td { height: 16px; padding: 0; border-right: 1px solid #dcdcdc; text-align: center; }
.events td:first-child, .events tr > :last-child { border-right: 0; }
.events th svg, .events td svg { width: 9px; height: 9px; margin: 0 auto; }
.events .desc svg { display: inline-block; margin: 0 3px 0 0; vertical-align: middle; }
.events .desc, .events .msg { text-align: left; padding-left: 3px; }
.events .time { text-align: right; padding-right: 4px; }

/* viewport */
.view { flex: 1; min-width: 0; display: flex; flex-direction: column; }
.viewtabs { position: relative; display: flex; height: 14px; padding-left: 6px; background: #e4e6e8; border-bottom: 1px solid #d4d6d8; }
.viewtabs > button { display: flex; align-items: center; gap: 2px; padding: 0 2px; }
.viewtabs > .on { width: 62px; background: #fff; font-weight: 600; }
.viewtabs svg { width: 10px; height: 10px; }
.panes { display: flex; gap: 2px; align-items: center; margin-left: auto; padding-right: 2px; }
.panes .on { background: #a8c1de; }
.panes svg { width: 9px; height: 9px; }
.grip { position: absolute; left: 54%; top: 6px; width: 36px; height: 4px; border: solid #cfd1dc; border-width: 1px 0; }
.stage { position: relative; flex: 1; min-height: 0; background: linear-gradient(90deg, #f3f4f7, #fafafb 14%, #fff 28%, #fff 70%, #fafafb 85%, #eff0f4); }
.part { width: 100%; height: 100%; }
.viewbar { position: absolute; top: 2px; left: 0; right: 0; display: flex; justify-content: center; align-items: center; padding-left: 12px; color: #666; }
.viewbar button { display: flex; align-items: center; justify-content: center; width: 17px; height: 14px; }
.viewbar .wide { width: auto; gap: 2px; padding: 0 3px; }
.viewbar .on { background: #e3e3e3; }
.viewbar svg { width: 10px; height: 10px; }

/* status */
.status { display: flex; align-items: center; justify-content: space-between; height: 14px; padding-left: 6px; border-top: 1px solid #d0d2d4; background: #fdfdfd; font-family: Roboto, sans-serif; }
.right { display: flex; align-items: center; gap: 4px; }
.right button { width: 11px; height: 12px; display: flex; align-items: center; justify-content: center; }
.right svg { width: 10px; height: 10px; }
.right .line { width: 43px; height: 13px; padding: 0 3px; gap: 3px; border: 1px solid #666; background: #e6e6e6; }
.line::after { content: ""; border: 2px solid transparent; border-top-color: #222; border-bottom: 0; }
.line i { flex: 1; height: 2px; background: #b3173b; }
```
